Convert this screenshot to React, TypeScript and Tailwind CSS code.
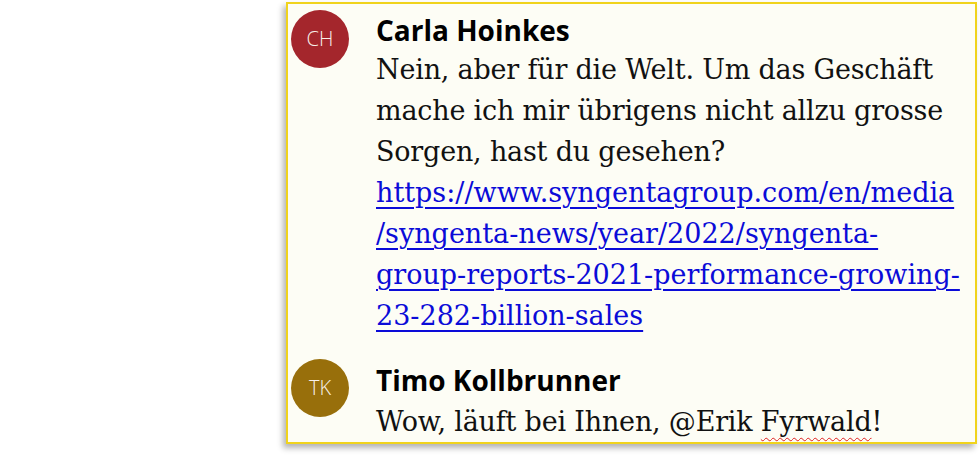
import React from "react";

const serif = { fontFamily: '"DejaVu Serif", "Liberation Serif", serif' };
const sans = { fontFamily: '"Open Sans", "Noto Sans", sans-serif' };

function Avatar({ initials, color }: { initials: string; color: string }) {
  return (
    <div
      className={`w-[58px] h-[58px] rounded-full flex items-center justify-center text-[#f8f1ea] text-[20px] font-light shrink-0 ${color}`}
      style={sans}
    >
      {initials}
    </div>
  );
}

export default function App() {
  return (
    <div className="w-[980px] h-[471px] bg-white relative">
      <div className="absolute left-[286px] top-[2px] w-[691px] h-[442px] border-2 border-[#f0d31c] bg-[#fdfdf5] shadow-[-3px_4px_6px_rgba(0,0,0,0.3)] pl-[3px] pt-[6px]">
        <div className="flex gap-[27px]">
          <Avatar initials="CH" color="bg-[#a4262c]" />
          <div className="flex flex-col pt-[5px] whitespace-nowrap">
            <div className="text-[28px] font-bold leading-[30px] text-black" style={sans}>
              Carla Hoinkes
            </div>
            <div className="text-[27px] tracking-[-0.2px] leading-[41px] text-[#111] mt-[4px]" style={serif}>
              Nein, aber für die Welt. Um das Geschäft
              <br />
              mache ich mir übrigens nicht allzu grosse
              <br />
              Sorgen, hast du gesehen?
              <br />
              <a className="text-[#0b0bd8] underline decoration-[1.5px] underline-offset-[5px] tracking-[0px]" href="#">
                https://www.syngentagroup.com/en/media
                <br />
                /syngenta-news/year/2022/syngenta-
                <br />
                group-reports-2021-performance-growing-
                <br />
                23-282-billion-sales
              </a>
            </div>
          </div>
        </div>
        <div className="flex gap-[27px] mt-[23px]">
          <Avatar initials="TK" color="bg-[#986f0b]" />
          <div className="flex flex-col pt-[6px] whitespace-nowrap">
            <div className="text-[28px] font-bold leading-[30px] text-black" style={sans}>
              Timo Kollbrunner
            </div>
            <div className="text-[27px] tracking-[-0.2px] leading-[41px] text-[#111] mt-[6px]" style={serif}>
              Wow, läuft bei Ihnen, @Erik{" "}
              <span className="underline decoration-wavy decoration-[#e02020] decoration-[1px] underline-offset-[6px]">
                Fyrwald
              </span>
              !
            </div>
          </div>
        </div>
      </div>
    </div>
  );
}
